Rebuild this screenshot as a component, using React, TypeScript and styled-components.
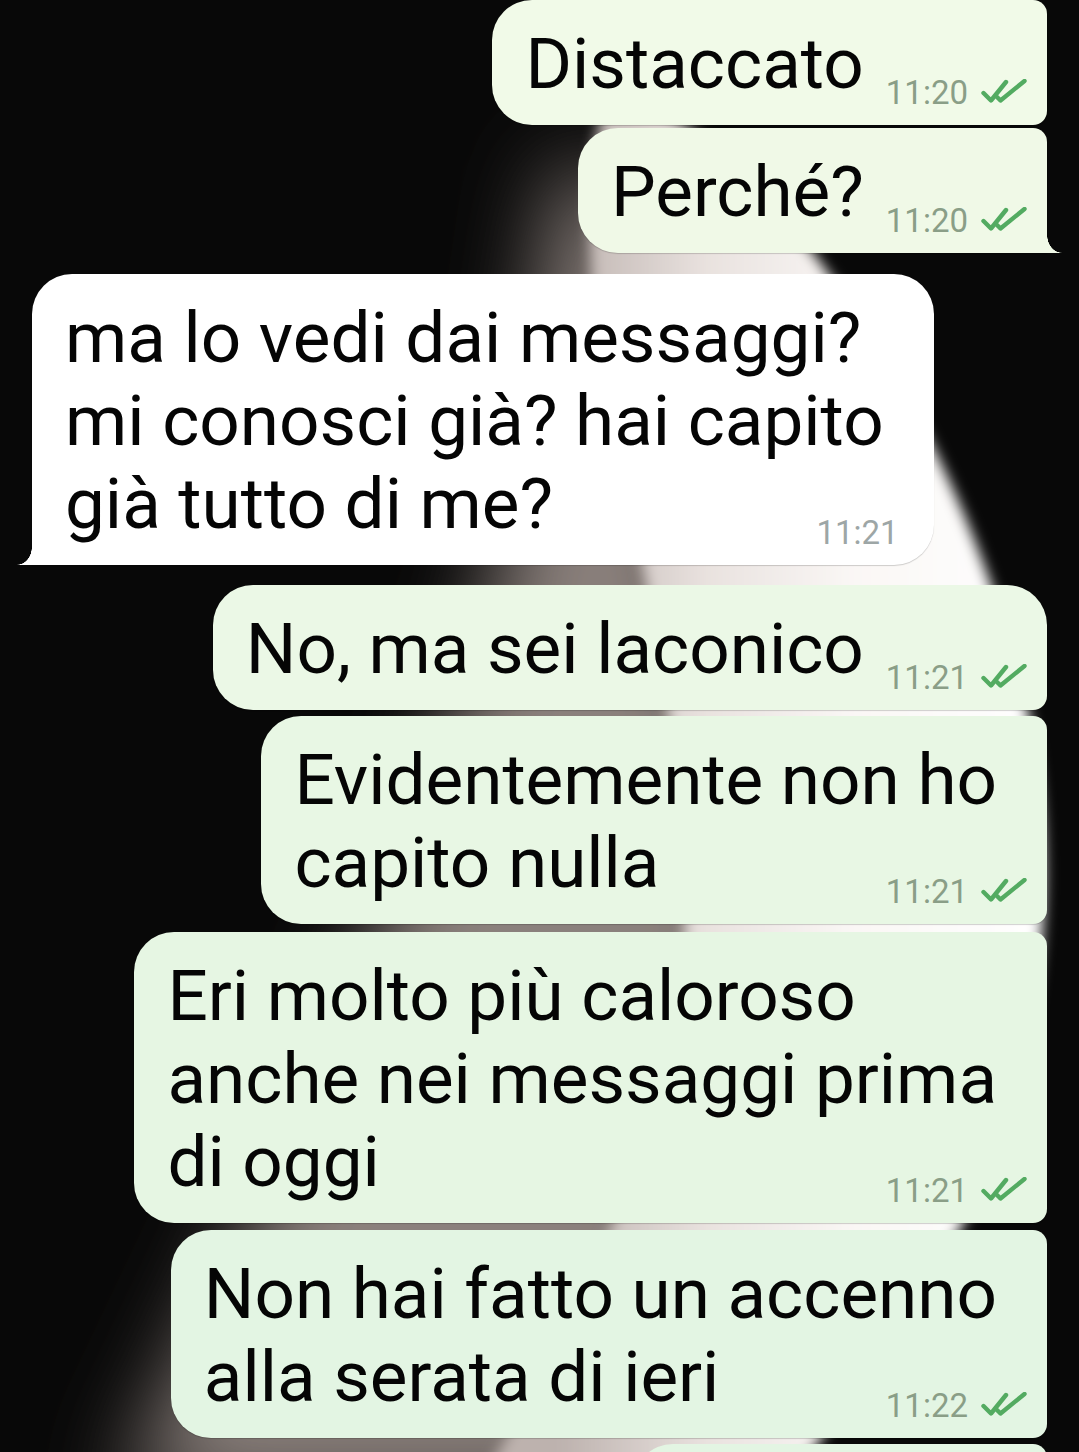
import styled, { createGlobalStyle } from 'styled-components';

interface Message {
  out: boolean;
  lines: string[];
  time: string;
  tint: string;
  radius: string;
  gap: number;
  tail?: boolean;
}

const messages: Message[] = [
  { out: true, lines: ['Distaccato'], time: '11:20', tint: '#f1fae8', radius: '40px 14px 14px 40px', gap: 0 },
  { out: true, lines: ['Perché?'], time: '11:20', tint: '#f0f9e7', radius: '40px 14px 0 40px', gap: 3, tail: true },
  {
    out: false,
    lines: ['ma lo vedi dai messaggi?', 'mi conosci già? hai capito', 'già tutto di me?'],
    time: '11:21',
    tint: '#ffffff',
    radius: '40px 40px 40px 0',
    gap: 21,
    tail: true,
  },
  { out: true, lines: ['No, ma sei laconico'], time: '11:21', tint: '#ebf8e6', radius: '40px 40px 14px 40px', gap: 20 },
  { out: true, lines: ['Evidentemente non ho', 'capito nulla'], time: '11:21', tint: '#e8f7e4', radius: '40px 14px 14px 40px', gap: 6 },
  {
    out: true,
    lines: ['Eri molto più caloroso', 'anche nei messaggi prima', 'di oggi'],
    time: '11:21',
    tint: '#e6f6e3',
    radius: '40px 14px 14px 40px',
    gap: 8,
  },
  { out: true, lines: ['Non hai fatto un accenno', 'alla serata di ieri'], time: '11:22', tint: '#e3f5e3', radius: '40px 14px 14px 40px', gap: 7 },
];

const GlobalStyle = createGlobalStyle`
  html, body {
    margin: 0;
    padding: 0;
    background: #080808;
  }
  body {
    font-family: Roboto, "Noto Sans", Arial, sans-serif;
  }
`;

const Screen = styled.div`
  display: grid;
  width: 1079px;
  height: 1452px;
  overflow: hidden;
  background: #080808;
`;

const Wallpaper = styled.svg`
  grid-area: 1 / 1;
  display: block;
  width: 1079px;
  height: 1452px;
`;

const Chat = styled.div`
  grid-area: 1 / 1;
  z-index: 1;
  display: flex;
  flex-direction: column;
  padding: 0 32px;
`;

const Bubble = styled.div<{ $out: boolean; $tint: string; $radius: string; $gap: number; $tail?: boolean }>`
  position: relative;
  align-self: ${({ $out }) => ($out ? 'flex-end' : 'flex-start')};
  display: flex;
  flex-direction: column;
  margin-top: ${({ $gap }) => $gap}px;
  padding: 22px ${({ $out }) => ($out ? 20 : 35)}px 20px 33px;
  background: ${({ $tint }) => $tint};
  border-radius: ${({ $radius }) => $radius};
  box-shadow: 0 1px 1px rgba(0, 0, 0, 0.18);

  &::after {
    content: '';
    display: ${({ $tail }) => ($tail ? 'block' : 'none')};
    position: absolute;
    bottom: 0;
    width: 15px;
    height: 18px;
    ${({ $out, $tint }) =>
      $out
        ? `right: -15px; background: radial-gradient(ellipse 15px 18px at 100% 0, transparent 97%, ${$tint} 100%);`
        : `left: -15px; background: radial-gradient(ellipse 15px 18px at 0 0, transparent 97%, ${$tint} 100%);`}
  }
`;

const Line = styled.div<{ $out: boolean }>`
  font-size: 71px;
  line-height: 83px;
  color: #050505;
  white-space: nowrap;
  margin-right: ${({ $out }) => ($out ? 30 : 15)}px;
`;

const LastRow = styled.div`
  display: flex;
  align-items: flex-end;
  justify-content: space-between;
  gap: 22px;

  & > ${Line} {
    margin-right: 0;
  }
`;

const Meta = styled.div`
  display: flex;
  align-items: flex-end;
  gap: 13px;
  margin-bottom: -4px;
`;

const Time = styled.span<{ $out: boolean }>`
  font-size: 33px;
  line-height: 33px;
  color: ${({ $out }) => ($out ? '#8a9e87' : '#9da6a6')};
`;

const Ticks = styled.svg`
  display: block;
  width: 46px;
  height: 24px;
  margin-bottom: 6px;
`;

const Peek = styled.div`
  align-self: flex-end;
  width: 414px;
  height: 120px;
  margin-top: 6px;
  background: #e3f5e3;
  border-radius: 40px 14px 14px 40px;
`;

function DoubleTick() {
  return (
    <Ticks viewBox="0 0 46 24">
      <g fill="none" stroke="#53ab61" strokeWidth="4.4" strokeLinecap="round" strokeLinejoin="round">
        <path d="M2.5 14 L10 21.5 L25 3" />
        <path d="M16 18 L19.5 21.5 L43.5 2" />
      </g>
    </Ticks>
  );
}

function Backdrop() {
  return (
    <Wallpaper viewBox="0 0 1079 1452" preserveAspectRatio="none">
      <defs>
        <filter id="halo" x="-50%" y="-50%" width="200%" height="200%">
          <feGaussianBlur stdDeviation="45" />
        </filter>
        <filter id="edge" x="-10%" y="-10%" width="120%" height="120%">
          <feGaussianBlur stdDeviation="7" />
        </filter>
        <linearGradient id="core" x1="560" y1="0" x2="1050" y2="0" gradientUnits="userSpaceOnUse">
          <stop offset="0" stopColor="#bdb2ae" />
          <stop offset="0.3" stopColor="#e9e2df" />
          <stop offset="0.6" stopColor="#faf7f5" />
          <stop offset="1" stopColor="#ffffff" />
        </linearGradient>
      </defs>
      <path
        d="M560 160 L650 200 L700 600 L760 925 L700 1225 L600 1500 L120 1500 L250 1225 L380 925 L500 575 Z"
        fill="#8a807c"
        filter="url(#halo)"
      />
      <path
        d="M610 95 C690 105 775 195 840 290 C920 405 990 545 1030 720 C1060 880 1045 1060 965 1220 C900 1340 830 1420 780 1500 L470 1500 C560 1350 640 1200 680 1000 C700 820 650 600 600 360 C585 260 585 140 610 95 Z"
        fill="url(#core)"
        filter="url(#edge)"
      />
    </Wallpaper>
  );
}

export default function App() {
  return (
    <>
      <GlobalStyle />
      <Screen>
        <Backdrop />
        <Chat>
          {messages.map((m, i) => {
            const head = m.lines.slice(0, -1);
            const last = m.lines[m.lines.length - 1];
            return (
              <Bubble key={i} $out={m.out} $tint={m.tint} $radius={m.radius} $gap={m.gap} $tail={m.tail}>
                {head.map((line) => (
                  <Line key={line} $out={m.out}>
                    {line}
                  </Line>
                ))}
                <LastRow>
                  <Line $out={m.out}>{last}</Line>
                  <Meta>
                    <Time $out={m.out}>{m.time}</Time>
                    {m.out && <DoubleTick />}
                  </Meta>
                </LastRow>
              </Bubble>
            );
          })}
          <Peek />
        </Chat>
      </Screen>
    </>
  );
}
